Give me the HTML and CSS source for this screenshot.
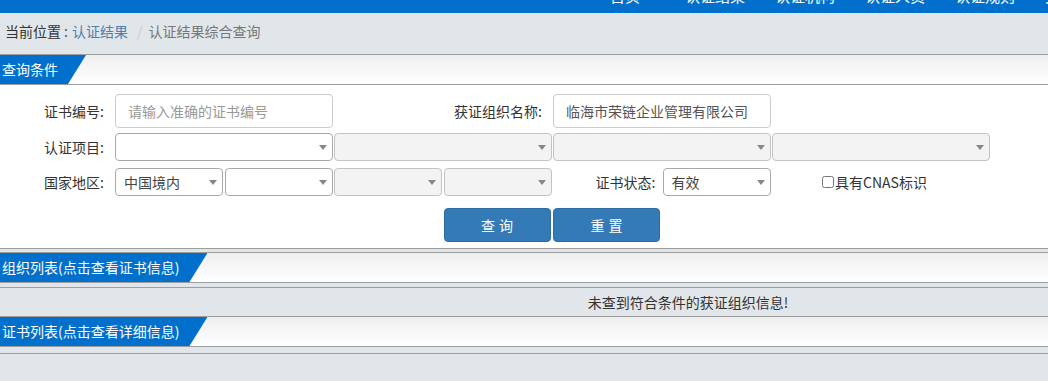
FILE: index.html
```html
<!DOCTYPE html>
<html lang="zh-CN">

<head>
    <meta charset="UTF-8">
    <meta name="viewport" content="width=device-width, initial-scale=1.0">
    <title>认证结果综合查询</title>
    <link rel="stylesheet" href="styles.css">
</head>

<body>
    <div class="topnav">
        <a class="nav-item nav-first">首页</a>
        <a class="nav-item">认证结果</a>
        <a class="nav-item">认证机构</a>
        <a class="nav-item">认证人员</a>
        <a class="nav-item">认证规则</a>
        <a class="nav-item">关于我们</a>
    </div>

    <div class="crumb">
        <span class="crumb-label">当前位置</span><span class="crumb-colon">:</span><a class="crumb-link">认证结果</a><span class="crumb-sep">/</span><span class="crumb-cur">认证结果综合查询</span>
    </div>

    <!-- 查询条件 -->
    <div class="panel">
        <div class="panel-head"><span class="tab">查询条件</span></div>
        <div class="search-box">
            <div class="form-row row-1">
                <label class="form-label">证书编号:</label>
                <input class="text-input span-2" type="text" placeholder="请输入准确的证书编号">
                <label class="form-label span-2">获证组织名称:</label>
                <input class="text-input span-2" type="text" value="临海市荣链企业管理有限公司">
            </div>
            <div class="form-row row-2">
                <label class="form-label">认证项目:</label>
                <div class="sel span-2"><select></select></div>
                <div class="sel span-2 is-off"><select disabled></select></div>
                <div class="sel span-2 is-off"><select disabled></select></div>
                <div class="sel span-2 is-off"><select disabled></select></div>
            </div>
            <div class="form-row row-3">
                <label class="form-label">国家地区:</label>
                <div class="sel"><select><option>中国境内</option></select></div>
                <div class="sel"><select></select></div>
                <div class="sel is-off"><select disabled></select></div>
                <div class="sel is-off"><select disabled></select></div>
                <label class="form-label label-tight">证书状态:</label>
                <div class="sel"><select><option>有效</option></select></div>
                <label class="check span-2"><input type="checkbox">具有CNAS标识</label>
            </div>
            <div class="form-row row-4">
                <button class="btn btn-search">查询</button>
                <button class="btn btn-reset">重置</button>
            </div>
        </div>
    </div>

    <!-- 组织列表 -->
    <div class="panel panel-gap">
        <div class="panel-head"><span class="tab">组织列表(点击查看证书信息)</span></div>
        <div class="list-body">
            <div class="empty-msg">未查到符合条件的获证组织信息!</div>
        </div>
    </div>

    <!-- 证书列表 -->
    <div class="panel">
        <div class="panel-head"><span class="tab">证书列表(点击查看详细信息)</span></div>
        <div class="cert-body"></div>
    </div>
</body>

</html>
```

FILE: styles.css
```css
body {
    margin: 0;
    background-color: #e1e6ea;
    color: #333;
    font-family: "Noto Sans CJK SC", "Noto Sans", sans-serif;
    font-size: 14px;
    overflow: hidden;
}

/* 顶部导航 */
.topnav {
    height: 13px;
    box-sizing: border-box;
    background-color: #0070cc;
    display: flex;
    align-items: flex-end;
    padding: 0 0 7px 610px;
    overflow: hidden;
}

.nav-item {
    flex-shrink: 0;
    color: #fff;
    font-size: 15px;
    line-height: 20px;
    margin-right: 30px;
    white-space: nowrap;
}

.nav-first {
    margin-right: 45px;
}

/* 面包屑 */
.crumb {
    height: 41px;
    line-height: 37px;
    padding-left: 5px;
    white-space: nowrap;
}

.crumb-label {
    color: #333;
}

.crumb-colon {
    color: #555;
    margin: 0 4px 0 3px;
}

.crumb-link {
    color: #4f7fae;
}

.crumb-sep {
    color: #ccc;
    margin: 0 6px 0 9px;
}

.crumb-cur {
    color: #777;
}

/* 面板 */
.panel-gap {
    margin-top: 3px;
}

.panel-head {
    height: 29px;
    border-top: 1px solid #9d9d9d;
    border-bottom: 1px solid #9d9d9d;
    background-image: linear-gradient(180deg, #efefef 0%, #ffffff 100%);
    display: flex;
}

.tab {
    background-color: #0070cc;
    color: #fff;
    line-height: 29px;
    padding: 0 28px 0 2px;
    white-space: nowrap;
    clip-path: polygon(0 0, 100% 0, calc(100% - 18px) 100%, 0 100%);
}

/* 查询条件 */
.search-box {
    background-color: #fff;
    border-bottom: 1px solid #9d9d9d;
    padding: 9px 0 6px 0;
}

.form-row {
    display: grid;
    grid-template-columns: 115px repeat(8, 109.5px);
    align-items: center;
}

.row-1 {
    height: 34px;
}

.row-2 {
    height: 28px;
    margin-top: 5px;
}

.row-3 {
    height: 28px;
    margin-top: 7px;
}

.row-4 {
    height: 34px;
    margin-top: 12px;
}

.span-2 {
    grid-column: span 2;
}

.form-label {
    text-align: right;
    padding-right: 11px;
    color: #333;
    white-space: nowrap;
}

.label-tight {
    padding-right: 7px;
}

.text-input {
    width: 218px;
    height: 34px;
    box-sizing: border-box;
    border: 1px solid #ccc;
    border-radius: 4px;
    padding: 0 12px;
    font-family: inherit;
    font-size: 14px;
    color: #555;
    outline: none;
}

.text-input::placeholder {
    color: #999;
}

.sel {
    position: relative;
    height: 28px;
    margin-right: 1.5px;
}

.sel select {
    width: 100%;
    height: 28px;
    box-sizing: border-box;
    appearance: none;
    -webkit-appearance: none;
    border: 1px solid #aaa;
    border-radius: 4px;
    background-color: #fff;
    padding: 0 20px 0 8px;
    font-family: inherit;
    font-size: 14px;
    color: #444;
    outline: none;
}

.sel.is-off select {
    background-color: #eee;
}

.sel::after {
    content: "";
    position: absolute;
    right: 6px;
    top: 12px;
    border-left: 4px solid transparent;
    border-right: 4px solid transparent;
    border-top: 5px solid #888;
}

.check {
    display: flex;
    align-items: center;
    justify-content: center;
    padding-right: 14px;
    color: #333;
    white-space: nowrap;
}

.check input {
    margin: 0 1px 0 0;
    width: 12px;
    height: 12px;
}

.btn {
    width: 107px;
    height: 34px;
    border: 1px solid #2e6da4;
    border-radius: 4px;
    background-color: #337ab7;
    color: #fff;
    font-family: inherit;
    font-size: 14px;
    letter-spacing: 4px;
    padding: 0 0 0 4px;
}

.btn-search {
    grid-column: 5;
}

.btn-reset {
    grid-column: 6;
}

/* 列表 */
.list-body {
    padding-top: 4px;
}

.empty-msg {
    border-top: 1px solid #9d9d9d;
    height: 28px;
    line-height: 28px;
    padding-left: 328px;
    text-align: center;
    color: #333;
    white-space: nowrap;
}

.cert-body {
    height: 6px;
    border-bottom: 1px solid #9d9d9d;
}
```
